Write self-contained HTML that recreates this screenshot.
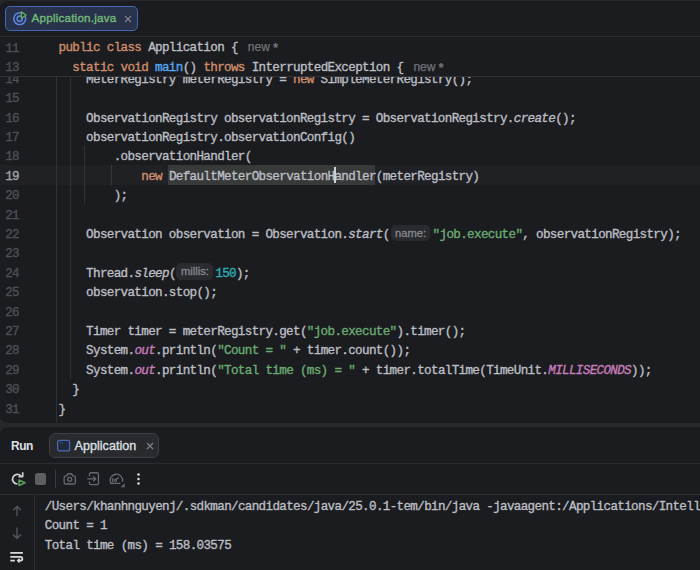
<!DOCTYPE html>
<html><head><meta charset="utf-8">
<style>
*{margin:0;padding:0;box-sizing:border-box}
html,body{width:700px;height:570px;overflow:hidden;background:#27282c}
.abs{position:absolute}
.island{position:absolute;left:-2px;width:712px;background:#1b1c1f;border-radius:11px;overflow:hidden}
#ed{top:1px;height:421.8px}
#run{top:427px;height:160px}
.sep{position:absolute;background:#2b2d30;height:1px}
.ln{position:absolute;left:0;width:21px;text-align:right;font-family:"Liberation Mono",monospace;font-size:12.6px;letter-spacing:-0.66px;-webkit-text-stroke:0.35px currentColor;color:#4b5059;height:21.4px;padding-top:2px;line-height:19.4px;white-space:pre}
.cl{position:absolute;left:60.5px;font-family:"Liberation Mono",monospace;font-size:12.6px;letter-spacing:-0.66px;-webkit-text-stroke:0.35px currentColor;color:#bcbec4;height:21.4px;padding-top:2px;line-height:19.4px;white-space:pre}
.k{color:#cf8e6d}
.m{color:#56a8f5}
.i{font-style:italic}
.sf{color:#c77dbb;font-style:italic}
.s{color:#6aab73}
.n{color:#2aacb8}
.hint{display:inline-block;font-family:"Liberation Sans",sans-serif;font-size:11.2px;letter-spacing:0;color:#858890;-webkit-text-stroke:0.3px #858890;background:#2a2b2f;border-radius:5px;height:16.2px;line-height:16.2px;vertical-align:0;position:relative;top:-1.3px;padding:0 4.5px}
.new{font-family:"Liberation Sans",sans-serif;font-size:12px;letter-spacing:0;color:#6f737a;-webkit-text-stroke:0.25px #6f737a;margin-left:10px}
.new b{position:relative;top:1px;font-weight:bold}
.guide{position:absolute;width:1px;background:#303236}
.con{position:absolute;left:44.8px;font-family:"Liberation Mono",monospace;font-size:12.6px;letter-spacing:-0.66px;-webkit-text-stroke:0.35px currentColor;color:#bcbec4;height:21.4px;padding-top:2px;line-height:19.4px;white-space:pre}
</style></head><body>

<!-- EDITOR ISLAND -->
<div class="island" id="ed">
  <!-- tab bar -->
  <div class="abs" style="left:7px;top:5px;width:133px;height:25px;border:1px solid #4266b8;background:#28324a;border-radius:5px"></div>
  <svg class="abs" style="left:13px;top:9px" width="18" height="18" viewBox="0 0 18 18">
    <circle cx="8.7" cy="8.65" r="5.95" fill="none" stroke="#5a86e6" stroke-width="1.5"/>
    <circle cx="8.7" cy="8.65" r="2.6" fill="none" stroke="#5a86e6" stroke-width="1.5"/>
    <path d="M10.3 1.8 L15 5.1 L10.3 8.4 Z" fill="#232a3c" stroke="#62a85a" stroke-width="1.4" stroke-linejoin="round"/>
  </svg>
  <div class="abs" style="left:33.6px;top:8.2px;height:18px;line-height:18px;font-family:'Liberation Sans',sans-serif;font-size:11.6px;letter-spacing:0.22px;color:#70b877;-webkit-text-stroke:0.4px #70b877">Application.java</div>
  <svg class="abs" style="left:125.7px;top:13.8px" width="8" height="8" viewBox="0 0 8 8"><path d="M1 1L7 7M7 1L1 7" stroke="#7e8188" stroke-width="1.2"/></svg>
  <div class="sep" style="left:0;top:35px;width:712px"></div>

  <!-- code area -->
  <div class="abs" style="left:0;top:36px;width:712px;height:386px;overflow:hidden">
    <!-- current line -->
    <div class="abs" style="left:0;top:128.4px;width:712px;height:19.4px;background:#202125"></div>
    <div class="abs" style="left:169.9px;top:128.4px;width:207.2px;height:19.4px;background:#383a39"></div>
    <!-- indent guides -->
    <div class="guide" style="left:58px;top:40px;height:345px"></div>
    <div class="guide" style="left:72px;top:40px;height:302px"></div>
    <div class="guide" style="left:86px;top:108.5px;height:58.5px"></div>
    <div class="guide" style="left:113px;top:128.4px;height:19.2px;background:#34363a"></div>

    <div class="ln" style="top:31.7px">14</div><div class="cl" style="top:31.7px">    MeterRegistry meterRegistry = <span class="k">new</span> SimpleMeterRegistry();</div>
    <div class="ln" style="top:51.1px">15</div>
    <div class="ln" style="top:70.5px">16</div><div class="cl" style="top:70.5px">    ObservationRegistry observationRegistry = ObservationRegistry.<span class="i">create</span>();</div>
    <div class="ln" style="top:89.9px">17</div><div class="cl" style="top:89.9px">    observationRegistry.observationConfig()</div>
    <div class="ln" style="top:109.3px">18</div><div class="cl" style="top:109.3px">        .observationHandler(</div>
    <div class="ln" style="top:128.7px;color:#a1a3ab">19</div><div class="cl" style="top:128.7px">            <span class="k">new</span> DefaultMeterObservationHandler(meterRegistry)</div>
    <div class="ln" style="top:148.1px">20</div><div class="cl" style="top:148.1px">        );</div>
    <div class="ln" style="top:167.5px">21</div>
    <div class="ln" style="top:186.9px">22</div><div class="cl" style="top:186.9px">    Observation observation = Observation.<span class="i">start</span>(<span class="hint" style="margin-left:1px;margin-right:2.5px;width:39.5px">name:</span><span class="s">"job.execute"</span>, observationRegistry);</div>
    <div class="ln" style="top:206.3px">23</div>
    <div class="ln" style="top:225.7px">24</div><div class="cl" style="top:225.7px">    Thread.<span class="i">sleep</span>(<span class="hint" style="margin-left:0.6px;margin-right:2.4px;width:36.5px">millis:</span><span class="n">150</span>);</div>
    <div class="ln" style="top:245.1px">25</div><div class="cl" style="top:245.1px">    observation.stop();</div>
    <div class="ln" style="top:264.5px">26</div>
    <div class="ln" style="top:283.9px">27</div><div class="cl" style="top:283.9px">    Timer timer = meterRegistry.get(<span class="s">"job.execute"</span>).timer();</div>
    <div class="ln" style="top:303.3px">28</div><div class="cl" style="top:303.3px">    System.<span class="sf">out</span>.println(<span class="s">"Count = "</span> + timer.count());</div>
    <div class="ln" style="top:322.7px">29</div><div class="cl" style="top:322.7px">    System.<span class="sf">out</span>.println(<span class="s">"Total time (ms) = "</span> + timer.totalTime(TimeUnit.<span class="sf">MILLISECONDS</span>));</div>
    <div class="ln" style="top:342.1px">30</div><div class="cl" style="top:342.1px">  }</div>
    <div class="ln" style="top:361.5px">31</div><div class="cl" style="top:361.5px">}</div>
    <!-- caret -->
    <div class="abs" style="left:335.9px;top:129.6px;width:2px;height:16px;background:#ced0d6"></div>

    <!-- sticky -->
    <div class="abs" style="left:0;top:0;width:712px;height:40px;background:#1b1c1f"></div>
    <div class="ln" style="top:0.7px">11</div><div class="cl" style="top:-1.1px"><span class="k">public class</span> Application {<span class="new">new <b>*</b></span></div>
    <div class="ln" style="top:20.1px">13</div><div class="cl" style="top:19px">  <span class="k">static void</span> <span class="m">main</span>() <span class="k">throws</span> InterruptedException {<span class="new">new <b>*</b></span></div>
    <div class="sep" style="left:0;top:39px;width:712px;background:#303236"></div>
  </div>
</div>

<!-- RUN ISLAND -->
<div class="island" id="run"></div>
<div class="abs" style="left:11px;top:437px;height:18px;line-height:18px;font-family:'Liberation Sans',sans-serif;font-weight:bold;font-size:12px;letter-spacing:-0.45px;color:#dfe1e5">Run</div>
<div class="abs" style="left:49px;top:433px;width:110px;height:25px;border:1px solid #3d3f44;background:#292a2e;border-radius:6px"></div>
<svg class="abs" style="left:56px;top:439px" width="15" height="13" viewBox="0 0 15 13">
  <rect x="1.6" y="1.3" width="12" height="10.6" rx="2" fill="#222a3e" stroke="#4a69b0" stroke-width="1.3"/>
  <circle cx="4.2" cy="3.8" r="0.6" fill="#4a69b0"/><circle cx="6.2" cy="3.8" r="0.6" fill="#4a69b0"/>
</svg>
<div class="abs" style="left:74.6px;top:437px;height:18px;line-height:18px;font-family:'Liberation Sans',sans-serif;font-size:12.6px;color:#dfe1e5;-webkit-text-stroke:0.3px #dfe1e5">Application</div>
<svg class="abs" style="left:145.8px;top:441.8px" width="8" height="8" viewBox="0 0 8 8"><path d="M1 1L7 7M7 1L1 7" stroke="#7e8188" stroke-width="1.2"/></svg>
<div class="sep abs" style="left:0;top:463px;width:700px"></div>

<!-- toolbar -->
<svg class="abs" style="left:8px;top:468px" width="24" height="22" viewBox="0 0 24 22">
  <path d="M13.1 8.2 A4.8 4.8 0 1 0 9.4 16" fill="none" stroke="#ced0d6" stroke-width="1.7"/>
  <path d="M14.7 4.3 V8.6 H10.5" fill="none" stroke="#ced0d6" stroke-width="1.7" stroke-linejoin="round"/>
  <path d="M11 12 L17 14.7 L11 17.4 Z" fill="#1b1c1f" stroke="#5a9d5c" stroke-width="1.6" stroke-linejoin="round"/>
</svg>
<div class="abs" style="left:35px;top:473px;width:11px;height:11.5px;background:#5d5f63;border-radius:2.5px"></div>
<div class="abs" style="left:55px;top:470px;width:1px;height:17.5px;background:#393b40"></div>
<svg class="abs" style="left:62px;top:472px" width="16" height="14" viewBox="0 0 16 14">
  <path d="M2.15 5.4 A1.5 1.5 0 0 1 3.65 3.9 H4.8 L5.9 1.75 H9.6 L10.7 3.9 H11.85 A1.5 1.5 0 0 1 13.35 5.4 V10.5 A1.5 1.5 0 0 1 11.85 12 H3.65 A1.5 1.5 0 0 1 2.15 10.5 Z" fill="none" stroke="#676a70" stroke-width="1.3" stroke-linejoin="round"/>
  <circle cx="7.7" cy="7.3" r="2" fill="none" stroke="#676a70" stroke-width="1.3"/>
</svg>
<svg class="abs" style="left:86px;top:472px" width="14" height="14" viewBox="0 0 14 14">
  <path d="M3.45 4.3 V2.25 A1.5 1.5 0 0 1 4.95 0.75 H10.95 A1.5 1.5 0 0 1 12.45 2.25 V11.15 A1.5 1.5 0 0 1 10.95 12.65 H4.95 A1.5 1.5 0 0 1 3.45 11.15 V9.5" fill="none" stroke="#676a70" stroke-width="1.3"/>
  <path d="M1.2 6.9 H9.6 M7.2 4.4 L9.7 6.9 L7.2 9.4" fill="none" stroke="#676a70" stroke-width="1.3"/>
</svg>
<svg class="abs" style="left:107px;top:471px" width="19" height="18" viewBox="0 0 19 18">
  <path d="M15.5 10.6 A6.3 6.3 0 1 0 3.66 12.3 H13.3" fill="none" stroke="#676a70" stroke-width="1.3"/>
  <path d="M9.2 8.6 L11.7 6.4" stroke="#676a70" stroke-width="1.3"/>
  <circle cx="8.4" cy="9.3" r="1.1" fill="none" stroke="#676a70" stroke-width="1.1"/>
  <path d="M6.3 11.4 A3.3 3.3 0 0 1 6.1 7.2" fill="none" stroke="#676a70" stroke-width="1.1"/>
  <path d="M17.6 12.3 V16.2 H13.7 Z" fill="#676a70"/>
</svg>
<svg class="abs" style="left:136px;top:472px" width="6" height="14" viewBox="0 0 6 14">
  <circle cx="2.5" cy="2.4" r="1.25" fill="#dfe1e5"/><circle cx="2.5" cy="6.9" r="1.25" fill="#dfe1e5"/><circle cx="2.5" cy="11.4" r="1.25" fill="#dfe1e5"/>
</svg>
<div class="sep abs" style="left:0;top:494px;width:700px"></div>
<div class="abs" style="left:34px;top:494px;width:1px;height:80px;background:#2b2d30"></div>
<svg class="abs" style="left:11px;top:505px" width="12" height="12" viewBox="0 0 12 12"><path d="M6 11 V1.3 M2.1 5.2 L6 1.3 L9.9 5.2" fill="none" stroke="#55585e" stroke-width="1.3"/></svg>
<svg class="abs" style="left:11px;top:527px" width="12" height="13" viewBox="0 0 12 13"><path d="M6 0.6 V11.3 M2.1 7.5 L6 11.3 L9.9 7.5" fill="none" stroke="#55585e" stroke-width="1.3"/></svg>
<svg class="abs" style="left:9px;top:550px" width="16" height="15" viewBox="0 0 16 15">
  <path d="M1.3 2.9 H13.9 M1.3 6.85 H11.6 A1.88 1.88 0 0 1 11.6 10.6 H9 M1.3 10.6 H5.9" fill="none" stroke="#d6d8dc" stroke-width="1.8"/>
  <path d="M10.6 8.8 L8.8 10.6 L10.6 12.4" fill="none" stroke="#d6d8dc" stroke-width="1.6"/>
</svg>
<div class="con" style="top:495.9px">/Users/khanhnguyenj/.sdkman/candidates/java/25.0.1-tem/bin/java -javaagent:/Applications/IntelliJ IDEA.app</div>
<div class="con" style="top:514.6px">Count = 1</div>
<div class="con" style="top:534.8px">Total time (ms) = 158.03575</div>


</body></html>
